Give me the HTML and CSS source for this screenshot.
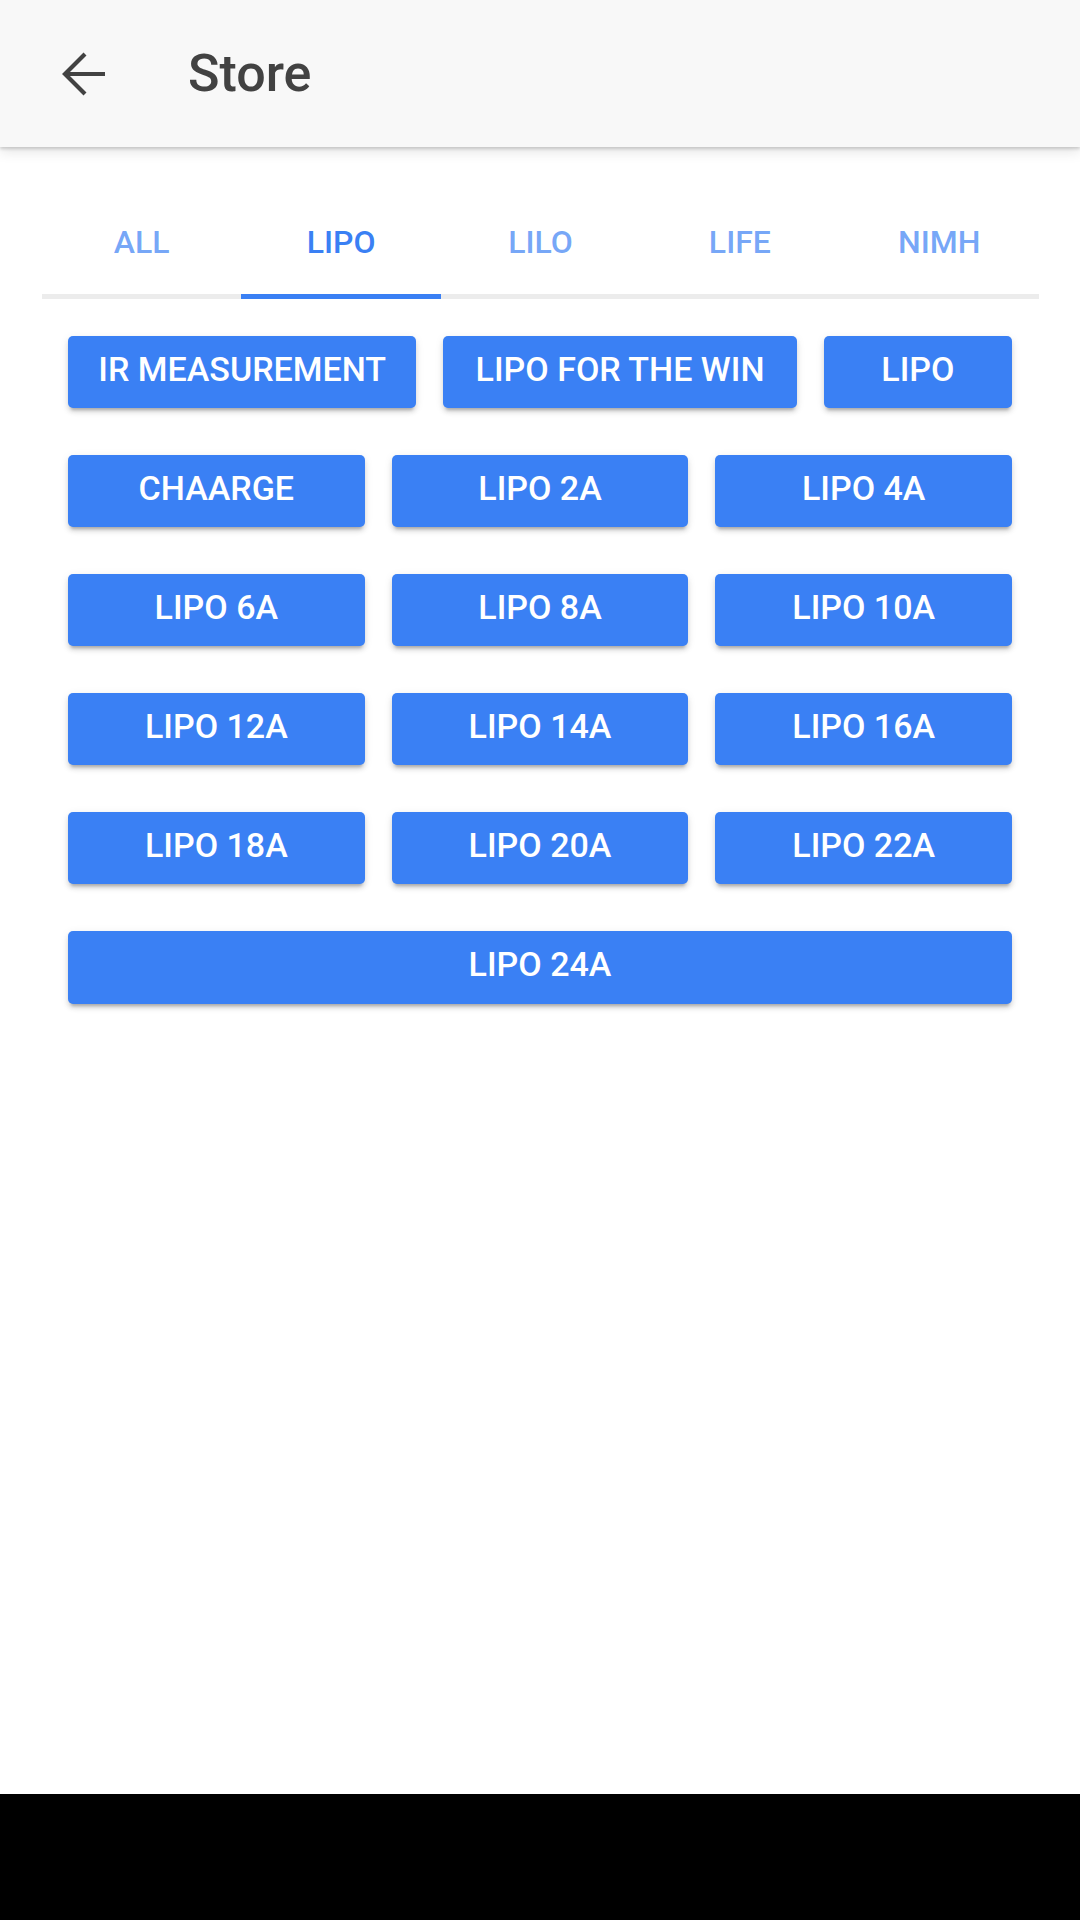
FILE: index.html
```html
<!DOCTYPE html>
<html lang="en">
<head>
<meta charset="utf-8">
<title>Store</title>
<link rel="stylesheet" href="styles.css">
</head>
<body>
<div class="app">
  <header class="toolbar">
    <button class="back" aria-label="Back">
      <svg width="63" height="63" viewBox="0 0 63 63" aria-hidden="true">
        <polyline points="32,12 12,32 32,52" fill="none" stroke="#424242" stroke-width="4.2" stroke-linejoin="miter" stroke-linecap="butt"/>
        <line x1="13" y1="32" x2="52" y2="32" stroke="#424242" stroke-width="4.2"/>
      </svg>
    </button>
    <h1 class="title">Store</h1>
  </header>

  <main class="content">
    <nav class="segment">
      <div class="seg-btn">ALL</div>
      <div class="seg-btn active">LIPO</div>
      <div class="seg-btn">LILO</div>
      <div class="seg-btn">LIFE</div>
      <div class="seg-btn">NIMH</div>
    </nav>

    <section class="buttons">
      <div class="row row-first">
        <button class="chip">IR MEASUREMENT</button>
        <button class="chip">LIPO FOR THE WIN</button>
        <button class="chip">LIPO</button>
      </div>
      <div class="row row-three">
        <button class="chip">CHAARGE</button>
        <button class="chip">LIPO 2A</button>
        <button class="chip">LIPO 4A</button>
      </div>
      <div class="row row-three">
        <button class="chip">LIPO 6A</button>
        <button class="chip">LIPO 8A</button>
        <button class="chip">LIPO 10A</button>
      </div>
      <div class="row row-three">
        <button class="chip">LIPO 12A</button>
        <button class="chip">LIPO 14A</button>
        <button class="chip">LIPO 16A</button>
      </div>
      <div class="row row-three">
        <button class="chip">LIPO 18A</button>
        <button class="chip">LIPO 20A</button>
        <button class="chip">LIPO 22A</button>
      </div>
      <div class="row row-one">
        <button class="chip">LIPO 24A</button>
      </div>
    </section>
  </main>

  <footer class="navbar"></footer>
</div>
</body>
</html>
```

FILE: styles.css
```css
* {
  box-sizing: border-box;
}

html, body {
  margin: 0;
  padding: 0;
  background: #ffffff;
}

body {
  font-family: Roboto, "Noto Sans", "Liberation Sans", sans-serif;
}

.app {
  width: 1080px;
  height: 1920px;
  display: flex;
  flex-direction: column;
  overflow: hidden;
}

.toolbar {
  height: 147px;
  flex: 0 0 147px;
  background: #f8f8f8;
  display: flex;
  align-items: center;
  padding-left: 53px;
  position: relative;
  z-index: 2;
  box-shadow: 0 2px 3px rgba(0, 0, 0, 0.16), 0 5px 12px rgba(0, 0, 0, 0.10);
}

.back {
  width: 63px;
  height: 63px;
  padding: 0;
  margin: 0;
  border: 0;
  background: transparent;
  display: flex;
}

.title {
  margin: 0 0 0 72px;
  font-size: 52px;
  font-weight: 500;
  color: #424242;
  letter-spacing: 0;
  line-height: 1;
}

.content {
  flex: 1;
  padding-top: 42px;
}

.segment {
  margin: 0 41px 0 42px;
  display: grid;
  grid-template-columns: repeat(5, 1fr);
}

.seg-btn {
  height: 110px;
  display: flex;
  align-items: center;
  justify-content: center;
  border-bottom: 5px solid #ececec;
  font-size: 32px;
  font-weight: 500;
  color: rgba(58, 128, 244, 0.7);
}

.seg-btn.active {
  color: #3a80f4;
  border-bottom-color: #3a80f4;
}

.buttons {
  margin: 37px 68px 0 68px;
  display: flex;
  flex-direction: column;
  gap: 47px;
}

.row {
  display: grid;
  column-gap: 27px;
}

.row-first {
  grid-template-columns: 348fr 353fr 188fr;
}

.row-three {
  grid-template-columns: repeat(3, 1fr);
}

.row-one {
  grid-template-columns: 1fr;
}

.chip {
  height: 72px;
  margin: 0;
  padding: 0 0 7px 0;
  border: 0;
  border-radius: 5px;
  background: #3a80f4;
  color: #ffffff;
  font-family: Roboto, "Noto Sans", "Liberation Sans", sans-serif;
  font-size: 34px;
  font-weight: 500;
  line-height: 1;
  white-space: nowrap;
  box-shadow: 0 5px 3px -3px rgba(0, 0, 0, 0.2), 0 4px 5px 0 rgba(0, 0, 0, 0.12), 0 2px 10px 0 rgba(0, 0, 0, 0.08);
}

.row-one .chip {
  height: 73px;
}

.navbar {
  flex: 0 0 126px;
  height: 126px;
  background: #000000;
}
```
